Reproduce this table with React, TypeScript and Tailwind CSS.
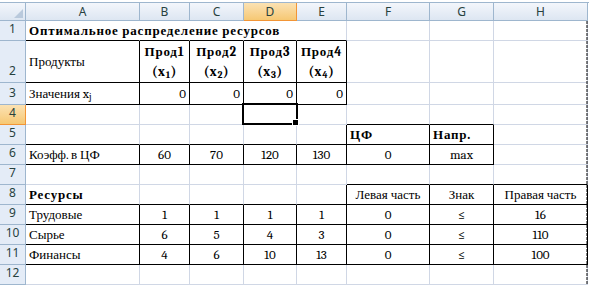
import type { ReactNode } from "react";

type Align = "l" | "c" | "r";

interface Cell {
  v?: ReactNode;
  a?: Align;
  b?: boolean;
  box?: boolean;
  spill?: boolean;
}

const LETTERS = ["A", "B", "C", "D", "E", "F", "G", "H"];
const COL_W = [
  "w-[114px]",
  "w-[50px]",
  "w-[54px]",
  "w-[53px]",
  "w-[50px]",
  "w-[83px]",
  "w-[64px]",
  "w-[94px]",
];
const ROW_H = [
  "h-[20px]",
  "h-[42px]",
  "h-[22px]",
  "h-[20px]",
  "h-[20px]",
  "h-[20px]",
  "h-[20px]",
  "h-[20px]",
  "h-[20px]",
  "h-[20px]",
  "h-[20px]",
  "h-[20px]",
];

const ACTIVE_COL = 3;
const ACTIVE_ROW = 3;

const empty = (): Cell[] => Array.from({ length: 8 }, () => ({}));

const prod = (n: number): Cell => ({
  v: (
    <div className="flex h-full flex-col items-center justify-between pt-[1px] pb-[2px]">
      <span>Прод{n}</span>
      <span>
        (x<sub>{n}</sub>)
      </span>
    </div>
  ),
  a: "c",
  b: true,
  box: true,
});

const num = (v: ReactNode, a: Align = "c"): Cell => ({ v, a, box: true });

const resource = (name: string, k: number[], rhs: number): Cell[] => [
  { v: name, box: true },
  ...k.map((x) => num(x)),
  num(0),
  num("≤"),
  num(rhs),
];

const SHEET: Cell[][] = [
  [{ v: "Оптимальное распределение ресурсов", b: true, spill: true }, ...empty().slice(1)],
  [{ v: "Продукты", box: true }, prod(1), prod(2), prod(3), prod(4), {}, {}, {}],
  [
    {
      v: (
        <span>
          Значения x<sub>j</sub>
        </span>
      ),
      box: true,
    },
    num(0, "r"),
    num(0, "r"),
    num(0, "r"),
    num(0, "r"),
    {},
    {},
    {},
  ],
  empty(),
  [{}, {}, {}, {}, {}, { v: "ЦФ", b: true, box: true }, { v: "Напр.", b: true, box: true }, {}],
  [{ v: "Коэфф. в ЦФ", box: true }, num(60), num(70), num(120), num(130), num(0), num("max"), {}],
  empty(),
  [
    { v: "Ресурсы", b: true },
    {},
    {},
    {},
    {},
    num("Левая часть"),
    num("Знак"),
    num("Правая часть"),
  ],
  resource("Трудовые", [1, 1, 1, 1], 16),
  resource("Сырье", [6, 5, 4, 3], 110),
  resource("Финансы", [4, 6, 10, 13], 100),
  empty(),
];

const boxed = (r: number, c: number) => !!SHEET[r]?.[c]?.box;

function GridCell({ r, c }: { r: number; c: number }) {
  const cell = SHEET[r][c];
  const spillOver = r === 0 && c < 4;
  const right = boxed(r, c) || boxed(r, c + 1)
    ? "border-r-black"
    : spillOver
      ? "border-r-transparent"
      : "border-r-[#d0d7e5]";
  const bottom = boxed(r, c) || boxed(r + 1, c) ? "border-b-black" : "border-b-[#d0d7e5]";
  const justify =
    cell.a === "c" ? "justify-center" : cell.a === "r" ? "justify-end" : "justify-start";
  const weight = cell.b ? "font-bold tracking-[0.8px]" : "";
  const active = r === ACTIVE_ROW && c === ACTIVE_COL;

  return (
    <div
      className={`relative flex shrink-0 items-center whitespace-nowrap border-r border-b px-[3px] font-serif text-[13px] text-black ${COL_W[c]} ${right} ${bottom} ${justify} ${weight} ${cell.spill ? "z-10 overflow-visible" : ""}`}
    >
      {cell.v !== undefined && (
        <div className={r === 1 && c > 0 ? "h-full w-full" : ""}>{cell.v}</div>
      )}
      {active && (
        <div className="absolute left-[-2px] top-[-2px] z-20 h-[22px] w-[56px] border-2 border-black">
          <div className="absolute left-[48px] top-[14px] h-[7px] w-[7px] border border-white bg-black" />
        </div>
      )}
    </div>
  );
}

function ColumnHeader() {
  return (
    <div className="flex h-[19px] border-t border-[#9eb6ce]">
      <div className="relative w-[26px] shrink-0 border-r border-b border-[#9eb6ce] bg-gradient-to-b from-[#f3f6fb] to-[#dde6f2]">
        <div className="absolute right-[2px] bottom-[2px] h-0 w-0 border-t-[9px] border-l-[9px] border-t-transparent border-l-transparent border-b-0 border-r-[9px] border-r-[#b9c9dc]" />
      </div>
      {LETTERS.map((l, c) => (
        <div
          key={l}
          className={`flex shrink-0 items-center justify-center border-r border-b font-sans text-[12px] text-[#27413e] ${COL_W[c]} ${
            c === ACTIVE_COL
              ? "border-[#f29536] bg-gradient-to-b from-[#fbe2b3] to-[#f6c873]"
              : "border-[#9eb6ce] bg-gradient-to-b from-[#f3f6fb] to-[#dde6f2]"
          }`}
        >
          {l}
        </div>
      ))}
    </div>
  );
}

export default function App() {
  return (
    <div className="relative h-[285px] w-[589px] overflow-hidden bg-white pt-[2px]">
      <ColumnHeader />
      <div className="flex flex-col">
        {SHEET.map((row, r) => (
          <div key={r} className={`flex ${ROW_H[r]}`}>
            <div
              className={`flex w-[26px] shrink-0 items-end justify-center border-r border-b pb-[2px] font-sans text-[12px] text-[#27413e] ${
                r === ACTIVE_ROW
                  ? "border-[#f29536] bg-gradient-to-b from-[#fbe2b3] to-[#f6c873]"
                  : "border-[#9eb6ce] bg-[#e4ecf7]"
              }`}
            >
              {r + 1}
            </div>
            <div className="flex">
              {row.map((_, c) => (
                <GridCell key={c} r={r} c={c} />
              ))}
            </div>
          </div>
        ))}
      </div>
      {/* page break marker after column H */}
      <svg className="absolute left-[586px] top-[21px]" width="2" height="264">
        <line x1="1" y1="0" x2="1" y2="264" stroke="#000" strokeWidth="1" strokeDasharray="3 1" />
      </svg>
    </div>
  );
}
